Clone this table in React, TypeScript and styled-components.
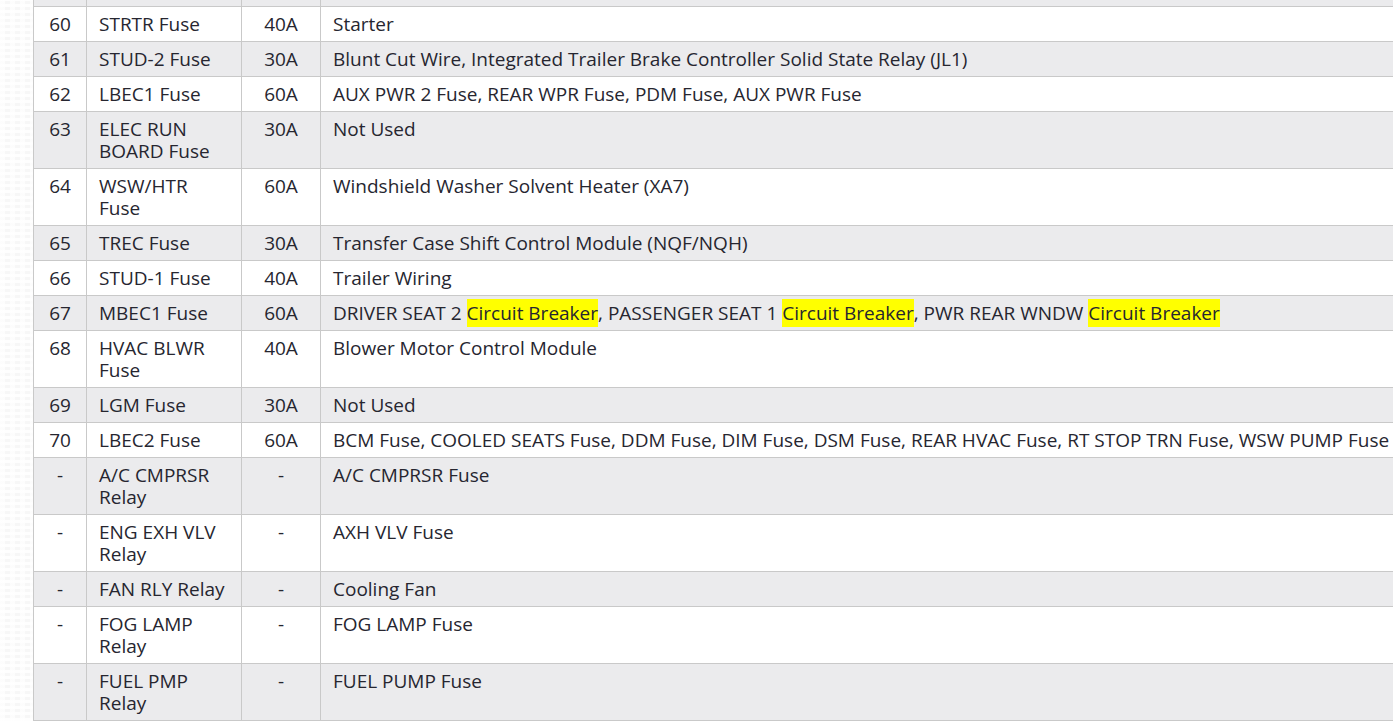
import React from "react";
import styled, { createGlobalStyle } from "styled-components";

const GlobalStyle = createGlobalStyle`
  html, body {
    margin: 0;
    padding: 0;
    overflow: hidden;
    background: #ffffff;
  }
  body {
    width: 1393px;
    height: 721px;
  }
`;

const Page = styled.div`
  display: flex;
  width: 1393px;
  height: 721px;
  overflow: hidden;
  background-color: #f7f7f7;
  background-image:
    repeating-linear-gradient(0deg, rgba(255,255,255,0.9) 0 3px, transparent 3px 6px),
    repeating-linear-gradient(90deg, rgba(255,255,255,0.7) 0 5px, transparent 5px 10px);
`;

const Gutter = styled.div`
  flex: 0 0 33px;
`;

const TableWrap = styled.div`
  flex: 0 0 auto;
  overflow: hidden;
  height: 721px;
`;

const Table = styled.table`
  border-collapse: collapse;
  table-layout: fixed;
  width: 1390px;
  margin-top: -29px;
  font-family: "Open Sans", "Noto Sans", sans-serif;
  font-size: 19px;
  line-height: 22px;
  color: #262630;
`;

const Row = styled.tr<{ $alt: boolean }>`
  background: ${(p) => (p.$alt ? "#ebebed" : "#ffffff")};
`;

const Cell = styled.td<{ $center?: boolean }>`
  border: 1px solid #c9c9c9;
  padding: 6px 12px;
  vertical-align: top;
  text-align: ${(p) => (p.$center ? "center" : "left")};
  white-space: normal;
`;

const Spacer = styled.td`
  border: 1px solid #c9c9c9;
  height: 22px;
  padding: 6px 12px;
`;

const Mark = styled.span`
  background: #ffff00;
  padding: 1px 0;
`;

type Part = string | { hl: string };

interface Item {
  no: string;
  name: string;
  rating: string;
  desc: Part[];
}

const CB = { hl: "Circuit Breaker" };

const items: Item[] = [
  { no: "60", name: "STRTR Fuse", rating: "40A", desc: ["Starter"] },
  { no: "61", name: "STUD-2 Fuse", rating: "30A", desc: ["Blunt Cut Wire, Integrated Trailer Brake Controller Solid State Relay (JL1)"] },
  { no: "62", name: "LBEC1 Fuse", rating: "60A", desc: ["AUX PWR 2 Fuse, REAR WPR Fuse, PDM Fuse, AUX PWR Fuse"] },
  { no: "63", name: "ELEC RUN BOARD Fuse", rating: "30A", desc: ["Not Used"] },
  { no: "64", name: "WSW/HTR Fuse", rating: "60A", desc: ["Windshield Washer Solvent Heater (XA7)"] },
  { no: "65", name: "TREC Fuse", rating: "30A", desc: ["Transfer Case Shift Control Module (NQF/NQH)"] },
  { no: "66", name: "STUD-1 Fuse", rating: "40A", desc: ["Trailer Wiring"] },
  { no: "67", name: "MBEC1 Fuse", rating: "60A", desc: ["DRIVER SEAT 2 ", CB, ", PASSENGER SEAT 1 ", CB, ", PWR REAR WNDW ", CB] },
  { no: "68", name: "HVAC BLWR Fuse", rating: "40A", desc: ["Blower Motor Control Module"] },
  { no: "69", name: "LGM Fuse", rating: "30A", desc: ["Not Used"] },
  { no: "70", name: "LBEC2 Fuse", rating: "60A", desc: ["BCM Fuse, COOLED SEATS Fuse, DDM Fuse, DIM Fuse, DSM Fuse, REAR HVAC Fuse, RT STOP TRN Fuse, WSW PUMP Fuse"] },
  { no: "-", name: "A/C CMPRSR Relay", rating: "-", desc: ["A/C CMPRSR Fuse"] },
  { no: "-", name: "ENG EXH VLV Relay", rating: "-", desc: ["AXH VLV Fuse"] },
  { no: "-", name: "FAN RLY Relay", rating: "-", desc: ["Cooling Fan"] },
  { no: "-", name: "FOG LAMP Relay", rating: "-", desc: ["FOG LAMP Fuse"] },
  { no: "-", name: "FUEL PMP Relay", rating: "-", desc: ["FUEL PUMP Fuse"] },
];

export default function App() {
  return (
    <>
      <GlobalStyle />
      <Page>
        <Gutter />
        <TableWrap>
          <Table>
            <colgroup>
              <col style={{ width: 53 }} />
              <col style={{ width: 155 }} />
              <col style={{ width: 79 }} />
              <col />
            </colgroup>
            <tbody>
              <Row $alt>
                <Spacer />
                <Spacer />
                <Spacer />
                <Spacer />
              </Row>
              {items.map((it, i) => (
                <Row key={i} $alt={i % 2 === 1}>
                  <Cell $center>{it.no}</Cell>
                  <Cell>{it.name}</Cell>
                  <Cell $center>{it.rating}</Cell>
                  <Cell>
                    {it.desc.map((p, j) =>
                      typeof p === "string" ? <React.Fragment key={j}>{p}</React.Fragment> : <Mark key={j}>{p.hl}</Mark>
                    )}
                  </Cell>
                </Row>
              ))}
            </tbody>
          </Table>
        </TableWrap>
      </Page>
    </>
  );
}
